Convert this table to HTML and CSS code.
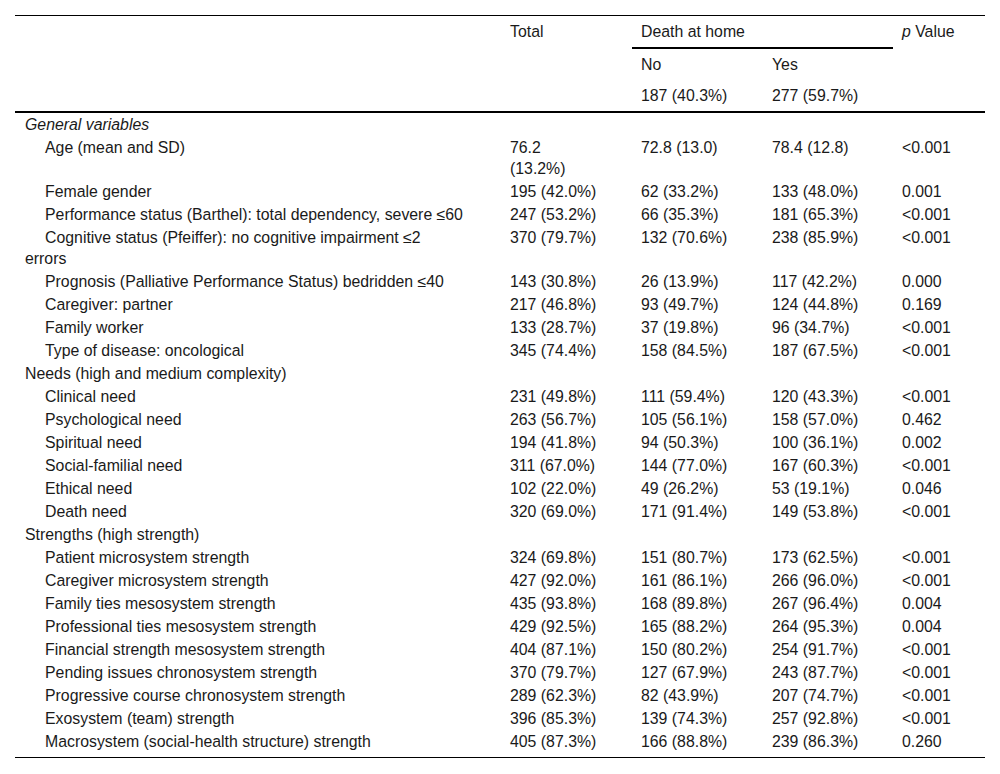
FILE: index.html
```html
<!DOCTYPE html>
<html lang="en">
<head>
<meta charset="utf-8">
<title>Death at home</title>
<link rel="stylesheet" href="styles.css">
</head>
<body>
<div class="wrap">
<table class="data">
  <colgroup>
    <col class="c-label"><col class="c-num"><col class="c-num"><col class="c-yes"><col class="c-p">
  </colgroup>
  <thead>
    <tr>
      <th rowspan="3" class="blank"></th>
      <th rowspan="3">Total</th>
      <th colspan="2" class="group">Death at home</th>
      <th rowspan="3"><i>p</i> Value</th>
    </tr>
    <tr><th>No</th><th>Yes</th></tr>
    <tr class="last-head"><th>187 (40.3%)</th><th>277 (59.7%)</th></tr>
  </thead>
  <tbody>
    <tr><td class="sec"><i>General variables</i></td><td></td><td></td><td></td><td></td></tr>
    <tr><td class="ind">Age (mean and SD)</td><td>76.2<br>(13.2%)</td><td>72.8 (13.0)</td><td>78.4 (12.8)</td><td>&lt;0.001</td></tr>
    <tr><td class="ind">Female gender</td><td>195 (42.0%)</td><td>62 (33.2%)</td><td>133 (48.0%)</td><td>0.001</td></tr>
    <tr><td class="ind">Performance status (Barthel): total dependency, severe ≤60</td><td>247 (53.2%)</td><td>66 (35.3%)</td><td>181 (65.3%)</td><td>&lt;0.001</td></tr>
    <tr><td class="ind">Cognitive status (Pfeiffer): no cognitive impairment ≤2<br>errors</td><td>370 (79.7%)</td><td>132 (70.6%)</td><td>238 (85.9%)</td><td>&lt;0.001</td></tr>
    <tr><td class="ind">Prognosis (Palliative Performance Status) bedridden ≤40</td><td>143 (30.8%)</td><td>26 (13.9%)</td><td>117 (42.2%)</td><td>0.000</td></tr>
    <tr><td class="ind">Caregiver: partner</td><td>217 (46.8%)</td><td>93 (49.7%)</td><td>124 (44.8%)</td><td>0.169</td></tr>
    <tr><td class="ind">Family worker</td><td>133 (28.7%)</td><td>37 (19.8%)</td><td>96 (34.7%)</td><td>&lt;0.001</td></tr>
    <tr><td class="ind">Type of disease: oncological</td><td>345 (74.4%)</td><td>158 (84.5%)</td><td>187 (67.5%)</td><td>&lt;0.001</td></tr>
    <tr><td class="sec">Needs (high and medium complexity)</td><td></td><td></td><td></td><td></td></tr>
    <tr><td class="ind">Clinical need</td><td>231 (49.8%)</td><td>111 (59.4%)</td><td>120 (43.3%)</td><td>&lt;0.001</td></tr>
    <tr><td class="ind">Psychological need</td><td>263 (56.7%)</td><td>105 (56.1%)</td><td>158 (57.0%)</td><td>0.462</td></tr>
    <tr><td class="ind">Spiritual need</td><td>194 (41.8%)</td><td>94 (50.3%)</td><td>100 (36.1%)</td><td>0.002</td></tr>
    <tr><td class="ind">Social-familial need</td><td>311 (67.0%)</td><td>144 (77.0%)</td><td>167 (60.3%)</td><td>&lt;0.001</td></tr>
    <tr><td class="ind">Ethical need</td><td>102 (22.0%)</td><td>49 (26.2%)</td><td>53 (19.1%)</td><td>0.046</td></tr>
    <tr><td class="ind">Death need</td><td>320 (69.0%)</td><td>171 (91.4%)</td><td>149 (53.8%)</td><td>&lt;0.001</td></tr>
    <tr><td class="sec">Strengths (high strength)</td><td></td><td></td><td></td><td></td></tr>
    <tr><td class="ind">Patient microsystem strength</td><td>324 (69.8%)</td><td>151 (80.7%)</td><td>173 (62.5%)</td><td>&lt;0.001</td></tr>
    <tr><td class="ind">Caregiver microsystem strength</td><td>427 (92.0%)</td><td>161 (86.1%)</td><td>266 (96.0%)</td><td>&lt;0.001</td></tr>
    <tr><td class="ind">Family ties mesosystem strength</td><td>435 (93.8%)</td><td>168 (89.8%)</td><td>267 (96.4%)</td><td>0.004</td></tr>
    <tr><td class="ind">Professional ties mesosystem strength</td><td>429 (92.5%)</td><td>165 (88.2%)</td><td>264 (95.3%)</td><td>0.004</td></tr>
    <tr><td class="ind">Financial strength mesosystem strength</td><td>404 (87.1%)</td><td>150 (80.2%)</td><td>254 (91.7%)</td><td>&lt;0.001</td></tr>
    <tr><td class="ind">Pending issues chronosystem strength</td><td>370 (79.7%)</td><td>127 (67.9%)</td><td>243 (87.7%)</td><td>&lt;0.001</td></tr>
    <tr><td class="ind">Progressive course chronosystem strength</td><td>289 (62.3%)</td><td>82 (43.9%)</td><td>207 (74.7%)</td><td>&lt;0.001</td></tr>
    <tr><td class="ind">Exosystem (team) strength</td><td>396 (85.3%)</td><td>139 (74.3%)</td><td>257 (92.8%)</td><td>&lt;0.001</td></tr>
    <tr class="last-row"><td class="ind">Macrosystem (social-health structure) strength</td><td>405 (87.3%)</td><td>166 (88.8%)</td><td>239 (86.3%)</td><td>0.260</td></tr>
  </tbody>
</table>
</div>
</body>
</html>
```
FILE: styles.css
```css
html, body {
  margin: 0;
  padding: 0;
  background: #fff;
}
.wrap {
  padding: 15px 15px 0 15px;
}
.data {
  width: 970px;
  border-collapse: collapse;
  table-layout: fixed;
  font-family: "Liberation Sans", Arial, sans-serif;
  font-size: 15.85px;
  color: #1a1a1a;
  border-top: 1px solid #000;
  border-bottom: 1px solid #000;
}
.c-label { width: 486px; }
.c-num { width: 131px; }
.c-yes { width: 130px; }
.c-p { width: 92px; }
.data th {
  font-weight: normal;
  text-align: left;
  vertical-align: top;
  line-height: 21px;
  padding: 5px 9px 5px 9px;
}
.data th.group {
  border-bottom: 2px solid #000;
}
.data thead {
  border-bottom: 2px solid #000;
}
.data td {
  text-align: left;
  vertical-align: top;
  line-height: 21px;
  padding: 1px 9px 1px 9px;
}
.data td.sec {
  padding-left: 10px;
}
.data td.ind {
  padding-left: 10px;
  text-indent: 20px;
}
.data tr.last-row td {
  padding-bottom: 5px;
}
```
